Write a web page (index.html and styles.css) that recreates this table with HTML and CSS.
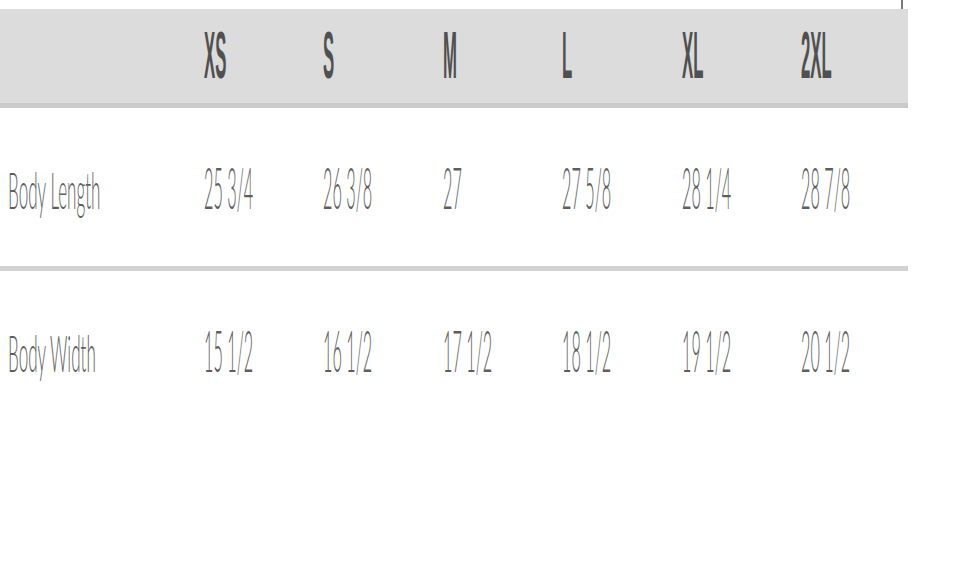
FILE: index.html
```html
<!DOCTYPE html>
<html>
<head>
<meta charset="utf-8">
<link rel="stylesheet" href="styles.css">
</head>
<body>
<div class="page">
  <div class="topstrip"><span class="tick"></span></div>
  <div class="table">
    <div class="row head">
      <div class="cell"></div>
      <div class="cell"><span class="hd">XS</span></div>
      <div class="cell"><span class="hd">S</span></div>
      <div class="cell"><span class="hd">M</span></div>
      <div class="cell"><span class="hd">L</span></div>
      <div class="cell"><span class="hd">XL</span></div>
      <div class="cell"><span class="hd">2XL</span></div>
    </div>
    <div class="row body sep">
      <div class="cell label"><span class="lb">Body Length</span></div>
      <div class="cell"><span class="val">25 3/4</span></div>
      <div class="cell"><span class="val">26 3/8</span></div>
      <div class="cell"><span class="val">27</span></div>
      <div class="cell"><span class="val">27 5/8</span></div>
      <div class="cell"><span class="val">28 1/4</span></div>
      <div class="cell"><span class="val">28 7/8</span></div>
    </div>
    <div class="row body">
      <div class="cell label"><span class="lb">Body Width</span></div>
      <div class="cell"><span class="val">15 1/2</span></div>
      <div class="cell"><span class="val">16 1/2</span></div>
      <div class="cell"><span class="val">17 1/2</span></div>
      <div class="cell"><span class="val">18 1/2</span></div>
      <div class="cell"><span class="val">19 1/2</span></div>
      <div class="cell"><span class="val">20 1/2</span></div>
    </div>
  </div>
</div>
</body>
</html>
```

FILE: styles.css
```css
* { box-sizing: border-box; }
html, body { margin: 0; padding: 0; background: #fff; }
body { font-family: "Liberation Sans", Arial, sans-serif; overflow: hidden; }

.page { width: 960px; height: 582px; }

.topstrip { height: 9px; display: flex; }
.tick { width: 2px; height: 9px; margin-left: 901px; background: #7a7a7a; }

.table { width: 908px; }

.row {
  display: grid;
  grid-template-columns: 204px repeat(5, 119.4px) 1fr;
  align-items: baseline;
}

.cell { white-space: nowrap; line-height: 1; }
.label { padding-left: 8px; }

.head {
  height: 99px;
  padding-top: 12px;
  background: #dcdcdc;
  border-bottom: 5px solid #cacaca;
}

.hd {
  display: inline-block;
  font-size: 67px;
  font-weight: 700;
  color: #505050;
  transform: scaleX(0.25);
  transform-origin: 0 0;
}

.body { padding-top: 51px; }
.body.sep { height: 163px; border-bottom: 5px solid #d2d2d2; }

.lb {
  display: inline-block;
  font-family: "Lato", "Liberation Sans", sans-serif;
  font-weight: 300;
  font-size: 51px;
  color: #5e5e5e;
  transform: scaleX(0.335);
  transform-origin: 0 0;
}

.val {
  display: inline-block;
  font-family: "Lato", "Liberation Sans", sans-serif;
  font-weight: 300;
  font-size: 57px;
  color: #5e5e5e;
  transform: scaleX(0.285);
  transform-origin: 0 0;
}
```
